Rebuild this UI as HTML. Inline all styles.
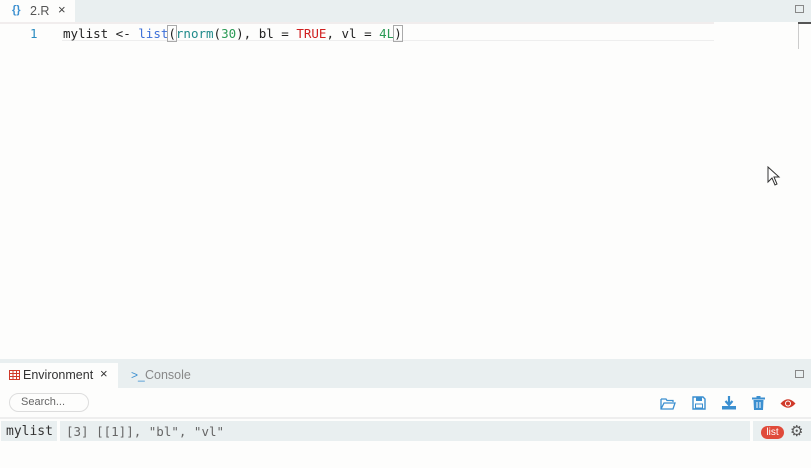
<!DOCTYPE html>
<html><head><style>
*{margin:0;padding:0;box-sizing:border-box}
body{width:811px;height:468px;background:#fdfdfc;font-family:"Liberation Sans",sans-serif;position:relative;overflow:hidden}
.a{position:absolute}
.mono{font-family:"DejaVu Sans Mono","Liberation Mono",monospace}
</style></head><body>
<div class="a" style="left:0;top:0;width:811px;height:22px;background:#e9eff0"></div>
<div class="a" style="left:0;top:0;width:75px;height:22px;background:#fdfdfc"></div>
<div class="a" style="left:12px;top:4px;font-size:11px;color:#3b8fd0;font-weight:bold">{}</div>
<div class="a" style="left:30px;top:4px;font-size:12.5px;color:#555">2.R</div>
<div class="a" style="left:58px;top:2px;font-size:13px;color:#444">×</div>
<div class="a" style="left:795px;top:5px;width:9px;height:8px;border:1.5px solid #888"></div>
<div class="a" style="left:0;top:22px;width:714px;height:2px;background:#f1eded"></div>
<div class="a" style="left:62px;top:40px;width:652px;height:1px;background:#eee"></div>
<div class="a" style="left:798px;top:22px;width:1px;height:27px;background:#ccc"></div>
<div class="a" style="left:798px;top:22px;width:13px;height:2px;background:#555"></div>
<div class="a mono" style="left:30px;top:26px;font-size:12.5px;color:#2a8cc0">1</div>
<div class="a mono" style="left:63px;top:26px;font-size:12.5px;color:#222;white-space:pre">mylist &lt;- <span style="color:#3c6fd8">list</span><span style="outline:1px solid #aaa">(</span><span style="color:#1f8a8a">rnorm</span>(<span style="color:#2a9a55">30</span>), bl = <span style="color:#d01f1f">TRUE</span>, vl = <span style="color:#2a9a55">4L</span><span style="outline:1px solid #aaa">)</span></div>
<svg class="a" style="left:767px;top:166px" width="14" height="20"><path d="M1 1 L1 16 L5 12 L8 19 L10 18 L7 11 L12 11 Z" fill="#fff" stroke="#333" stroke-width="1"/></svg>
<div class="a" style="left:0;top:359px;width:811px;height:29px;background:#e9eff0"></div>
<div class="a" style="left:0;top:363px;width:118px;height:25px;background:#fdfdfc"></div>
<svg class="a" style="left:9px;top:370px" width="11" height="10"><rect x="0.5" y="0.5" width="10" height="9" fill="none" stroke="#d03a2a"/><path d="M0 3.5H11M0 6.5H11M4 0V10M7.5 0V10" stroke="#d03a2a"/></svg>
<div class="a" style="left:23px;top:368px;font-size:12.5px;color:#333">Environment</div>
<div class="a" style="left:100px;top:366px;font-size:13px;color:#333">×</div>
<div class="a" style="left:131px;top:368px;font-size:12px;color:#3b8fd0">&gt;_</div>
<div class="a" style="left:145px;top:368px;font-size:12.5px;color:#888">Console</div>
<div class="a" style="left:795px;top:370px;width:9px;height:8px;border:1.5px solid #888"></div>
<div class="a" style="left:9px;top:393px;width:80px;height:19px;border:1px solid #ddd;border-radius:10px;font-size:11px;color:#666;padding:2px 0 0 11px">Search...</div>
<div class="a" style="left:0;top:417px;width:811px;height:2px;background:#eee"></div>
<div class="a" style="left:1px;top:421px;width:56px;height:20px;background:#e9eff0"></div>
<div class="a" style="left:60px;top:421px;width:690px;height:20px;background:#e9eff0"></div>
<div class="a" style="left:753px;top:421px;width:58px;height:20px;background:#e9eff0"></div>
<div class="a mono" style="left:6px;top:424px;font-size:13px;color:#333">mylist</div>
<div class="a mono" style="left:66px;top:424px;font-size:12.5px;color:#666">[3] [[1]], "bl", "vl"</div>
<div class="a" style="left:761px;top:426px;width:23px;height:13px;background:#e04a3a;border-radius:7px;color:#fff;font-size:10px;text-align:center;line-height:13px">list</div>
<div class="a" style="left:790px;top:422px;font-size:15px;color:#555">⚙</div>
<svg class="a" style="left:660px;top:397px" width="16" height="13"><path d="M1 2H6L7 3.5H13V5 M1 2V12H13L15 6H4L1 12" fill="none" stroke="#3b8fd0" stroke-width="1.3"/></svg>
<svg class="a" style="left:692px;top:396px" width="14" height="14"><path d="M1 1H11L13 3V13H1Z" fill="none" stroke="#3b8fd0" stroke-width="1.4"/><rect x="4" y="1" width="6" height="4" fill="#3b8fd0"/><rect x="3.5" y="8" width="7" height="4" fill="none" stroke="#3b8fd0"/></svg>
<svg class="a" style="left:722px;top:396px" width="14" height="14"><path d="M7 0V8M3.5 5L7 9L10.5 5" fill="none" stroke="#3b8fd0" stroke-width="2.2"/><rect x="0" y="10" width="14" height="3.5" fill="#3b8fd0"/></svg>
<svg class="a" style="left:752px;top:396px" width="13" height="14"><rect x="0" y="1.5" width="13" height="2" fill="#3b8fd0"/><rect x="4.5" y="0" width="4" height="2" fill="#3b8fd0"/><path d="M1.5 4H11.5L11 14H2Z" fill="#3b8fd0"/><path d="M5 6V12M8 6V12" stroke="#fff"/></svg>
<svg class="a" style="left:780px;top:398px" width="16" height="11"><path d="M0.5 5.5Q8 -3 15.5 5.5Q8 14 0.5 5.5Z" fill="#d03a2a"/><circle cx="8" cy="5.5" r="3" fill="#fff"/><circle cx="8" cy="5.5" r="2" fill="#d03a2a"/></svg>
</body></html>
